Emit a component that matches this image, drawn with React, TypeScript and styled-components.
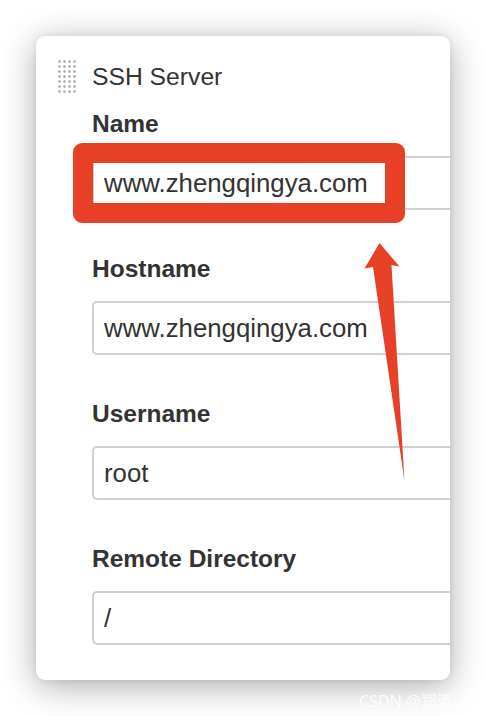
import React from "react";
import styled, { createGlobalStyle } from "styled-components";

const GlobalStyle = createGlobalStyle`
  html, body {
    margin: 0;
    padding: 0;
    background: #ffffff;
  }
  body {
    font-family: "Liberation Sans", Arial, Helvetica, sans-serif;
  }
`;

const Page = styled.div`
  position: relative;
  width: 486px;
  height: 716px;
  overflow: hidden;
  background: #ffffff;
  padding: 36px 0 0 36px;
  box-sizing: border-box;
`;

const Card = styled.div`
  position: relative;
  width: 414px;
  height: 644px;
  box-sizing: border-box;
  background: #ffffff;
  border-radius: 9px;
  overflow: hidden;
  box-shadow: 0 6px 34px rgba(0, 0, 0, 0.33), 0 0 6px rgba(0, 0, 0, 0.08);
  padding: 26px 0 35px 0;
`;

const Header = styled.div`
  display: flex;
  align-items: center;
  gap: 15px;
  padding-left: 21px;
  height: 30px;
`;

const DragHandle = styled.div`
  width: 20px;
  height: 36px;
  background-image: radial-gradient(circle, #b8b8b8 1.1px, transparent 1.6px);
  background-size: 5px 5px;
  background-position: 0 0;
`;

const Title = styled.div`
  font-size: 24.7px;
  line-height: 30px;
  color: #333333;
  font-weight: 400;
`;

const Form = styled.div`
  display: flex;
  flex-direction: column;
  gap: 44px;
  padding-left: 56px;
  margin-top: 17px;
`;

const Field = styled.div`
  position: relative;
  display: flex;
  flex-direction: column;
  gap: 17px;
`;

const Label = styled.label`
  font-size: 24.5px;
  line-height: 30px;
  font-weight: 700;
  color: #333333;
  white-space: nowrap;
`;

const TextInput = styled.input`
  width: 420px;
  height: 54px;
  box-sizing: border-box;
  border: 2px solid #d0d0d0;
  border-radius: 5px;
  padding: 0 10px;
  font-family: "Liberation Sans", Arial, Helvetica, sans-serif;
  font-size: 25.8px;
  color: #333333;
  background: #ffffff;
  outline: none;
`;

const Highlight = styled.div`
  position: absolute;
  left: -19px;
  top: 34px;
  width: 332px;
  height: 80px;
  box-sizing: border-box;
  border: 20px solid #e84026;
  border-radius: 9px;
  pointer-events: none;
`;

const Overlay = styled.svg`
  position: absolute;
  left: 0;
  top: 0;
  pointer-events: none;
`;

const Watermark = styled.div`
  position: absolute;
  left: 359px;
  top: 688px;
  font-family: "Noto Sans", "Noto Sans CJK SC", sans-serif;
  font-size: 16px;
  color: rgba(255, 255, 255, 0.85);
  white-space: nowrap;
  pointer-events: none;
`;

const fields = [
  { label: "Name", value: "www.zhengqingya.com", highlight: true },
  { label: "Hostname", value: "www.zhengqingya.com" },
  { label: "Username", value: "root" },
  { label: "Remote Directory", value: "/" },
];

export default function App() {
  return (
    <>
      <GlobalStyle />
      <Page>
        <Card>
          <Header>
            <DragHandle />
            <Title>SSH Server</Title>
          </Header>
          <Form>
            {fields.map((f) => (
              <Field key={f.label}>
                <Label>{f.label}</Label>
                <TextInput readOnly value={f.value} />
                {f.highlight && <Highlight />}
              </Field>
            ))}
          </Form>
        </Card>
        <Overlay width="486" height="716" viewBox="0 0 486 716">
          <polygon
            points="379.5,243 399.5,266.5 391.5,265 404.5,481 373,267 364.5,268.5"
            fill="#e84026"
          />
        </Overlay>
        <Watermark>CSDN @郑清</Watermark>
      </Page>
    </>
  );
}
